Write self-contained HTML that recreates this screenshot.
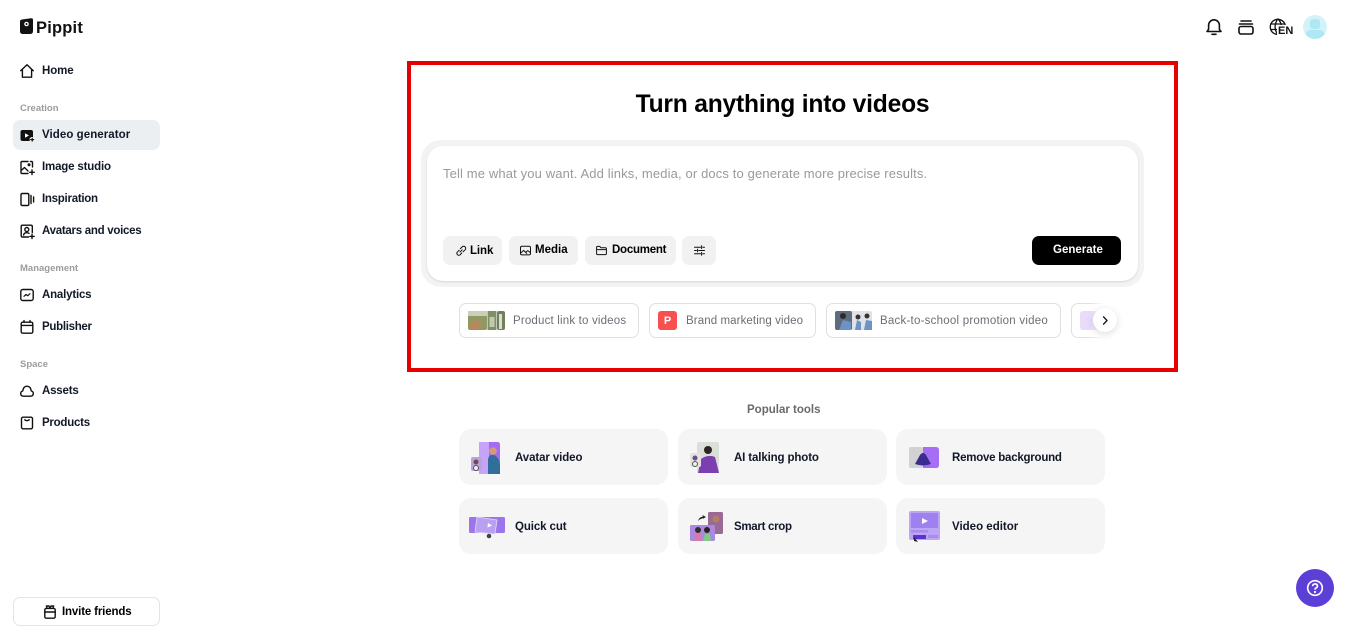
<!DOCTYPE html>
<html><head><meta charset="utf-8"><style>
*{box-sizing:border-box}
html,body{margin:0;padding:0;width:1365px;height:637px;overflow:hidden;background:#fff;font-family:"Liberation Sans",sans-serif}
.a{position:absolute}
.t{position:absolute;white-space:nowrap;font-weight:700;font-size:11.5px;color:#111827;line-height:14px;margin-top:1px}
.sec{position:absolute;left:20px;font-size:9.5px;font-weight:700;color:#9c9c9c;line-height:12px;white-space:nowrap;margin-top:1px}
svg{position:absolute;overflow:visible}
.btn{position:absolute;top:236px;height:29px;background:#f1f1f1;border-radius:7px}
.btn span{position:absolute;top:6px;font-size:11.5px;line-height:14px;font-weight:700;color:#000;white-space:nowrap;margin-top:1px}
.chip{position:absolute;top:303px;height:35px;border:1px solid #e0e0e0;border-radius:7px;background:#fff}
.chip span{position:absolute;top:10px;font-size:11.5px;line-height:14px;color:#6b6e76;white-space:nowrap}
.card{position:absolute;width:209px;height:56px;background:#f5f5f5;border-radius:12px}
.card span{position:absolute;left:56px;top:21px;font-size:11.5px;line-height:14px;font-weight:700;color:#111827;white-space:nowrap;margin-top:1px}
.ic{fill:none;stroke:#111;stroke-width:1.4;stroke-linejoin:round;stroke-linecap:round}
</style></head><body>

<!-- logo -->
<svg style="left:20px;top:18px" width="13" height="16" viewBox="0 0 13 16"><path d="M2 1.5L11 0.3Q13 0 13 2V13Q13 16 10 16H3Q0 16 0 13V3.5Q0 1.8 2 1.5Z" fill="#111"/><circle cx="6.5" cy="6" r="2.3" fill="#fff"/><circle cx="6.5" cy="6" r="1" fill="#111"/></svg>
<div class="t" style="left:36px;top:18px;font-size:16.5px;line-height:18px;color:#111;letter-spacing:.2px">Pippit</div>

<!-- sidebar -->
<div class="a" style="left:13px;top:120px;width:147px;height:30px;background:#ebeff2;border-radius:7px"></div>
<svg class="ic" style="left:20px;top:64px" width="14" height="14" viewBox="0 0 14 14"><path d="M0.7 6.7L7 0.8L13.3 6.7M2.4 5.4V13.2H11.6V5.4"/></svg>
<div class="t" style="left:42px;top:63px;letter-spacing:-.1px">Home</div>
<div class="sec" style="top:102px">Creation</div>
<svg style="left:20px;top:128px" width="15" height="15" viewBox="0 0 15 15"><rect x="0.5" y="2" width="12.5" height="11" rx="2" fill="#111"/><path d="M5 5.3L9 7.5L5 9.7Z" fill="#fff"/><path d="M12.2 9v5M9.7 11.5h5" stroke="#fff" stroke-width="3"/><path d="M12.2 9.6v4M10.2 11.6h4" stroke="#111" stroke-width="1.2"/></svg>
<div class="t" style="left:42px;top:127px;letter-spacing:.06px">Video generator</div>
<svg class="ic" style="left:20px;top:160px" width="15" height="15" viewBox="0 0 15 15"><path d="M8 1.5H2Q1 1.5 1 2.5V12.5Q1 13.5 2 13.5H8M12.5 7V2.5Q12.5 1.5 11.5 1.5H10.5M1.2 10.5L4.5 7.5L8 11"/><circle cx="9" cy="4.8" r=".8"/><path d="M12 10v4.6M9.7 12.3h4.6"/></svg>
<div class="t" style="left:42px;top:159px;letter-spacing:-.17px">Image studio</div>
<svg class="ic" style="left:20px;top:192px" width="15" height="15" viewBox="0 0 15 15"><rect x="1" y="1.5" width="7.8" height="12" rx="1.2"/><path d="M11 3.5v8M13.6 5v5"/></svg>
<div class="t" style="left:42px;top:191px;letter-spacing:-.27px">Inspiration</div>
<svg class="ic" style="left:20px;top:224px" width="15" height="15" viewBox="0 0 15 15"><path d="M8.5 13H2.5Q1.2 13 1.2 11.8V2.5Q1.2 1.2 2.5 1.2H11Q12.3 1.2 12.3 2.5V8.5"/><circle cx="6.8" cy="5.5" r="2"/><path d="M3.6 11Q4 8.7 6.8 8.7Q8.2 8.7 9 9.4"/><path d="M12 10.2v4.4M9.8 12.4h4.4"/></svg>
<div class="t" style="left:42px;top:223px;letter-spacing:-.28px">Avatars and voices</div>
<div class="sec" style="top:262px">Management</div>
<svg class="ic" style="left:20px;top:288px" width="14" height="14" viewBox="0 0 14 14"><rect x="0.8" y="1.5" width="12.4" height="11" rx="2"/><path d="M4 8.3L6 6.5L7.8 7.7L10 5.7" stroke-width="1.2"/></svg>
<div class="t" style="left:42px;top:287px;letter-spacing:-.2px">Analytics</div>
<svg class="ic" style="left:20px;top:320px" width="14" height="14" viewBox="0 0 14 14"><rect x="1.2" y="2.2" width="11.6" height="11" rx="1.5"/><path d="M1.2 5.4H12.8M4 .6V2.2M10 .6V2.2"/></svg>
<div class="t" style="left:42px;top:319px;letter-spacing:-.3px">Publisher</div>
<div class="sec" style="top:358px">Space</div>
<svg class="ic" style="left:20px;top:384px" width="14" height="14" viewBox="0 0 14 14"><path d="M3.5 12.2Q.7 12 .7 9.5Q.7 7.5 2.7 7Q3.5 2.2 7 2.2Q10.5 2.2 11.3 7Q13.3 7.5 13.3 9.5Q13.3 12 10.5 12.2Z"/></svg>
<div class="t" style="left:42px;top:383px;letter-spacing:-.2px">Assets</div>
<svg class="ic" style="left:20px;top:416px" width="14" height="14" viewBox="0 0 14 14"><rect x="1.5" y="1.2" width="11" height="11.6" rx="1.6"/><path d="M4.8 3.8Q7 5.6 9.2 3.8"/></svg>
<div class="t" style="left:42px;top:415px;letter-spacing:-.25px">Products</div>

<div class="a" style="left:13px;top:597px;width:147px;height:29px;border:1px solid #e4e4e4;border-radius:7px"></div>
<svg class="ic" style="left:44px;top:605px" width="12" height="14" viewBox="0 0 12 14"><rect x="0.8" y="3.4" width="10.4" height="9.8" rx="1.4"/><path d="M.8 7H11.2M3 3.4L2.4 1H5L6 3.4L7 1H9.6L9 3.4"/></svg>
<div class="t" style="left:62px;top:604px;color:#000;letter-spacing:-.15px">Invite friends</div>

<!-- top right -->
<svg class="ic" style="left:1205px;top:18px" width="18" height="18" viewBox="0 0 18 18"><path d="M2 13.5H16L14.4 11.4V7.2A5.4 5.4 0 0 0 3.6 7.2V11.4ZM7 16.3H11" stroke-width="1.6"/></svg>
<svg class="ic" style="left:1238px;top:20px" width="16" height="15" viewBox="0 0 16 15"><path d="M3 1H13M1.5 4H14.5" stroke-width="1.6"/><rect x="1" y="6.5" width="14" height="7.5" rx="2" stroke-width="1.6"/></svg>
<svg class="ic" style="left:1269px;top:18px" width="18" height="18" viewBox="0 0 18 18"><path d="M11 16.2A7.6 7.6 0 1 1 16.4 8M1.6 6H16M1.6 11.5H9M8.7 1Q3.5 8.8 8.7 16.6M9 1Q12.5 4.5 12.3 9" stroke-width="1.3"/></svg>
<div class="t" style="left:1277px;top:24px;font-size:11px;line-height:12px;color:#111;background:#fff;padding-left:1px">EN</div>
<div class="a" style="left:1303px;top:15px;width:24px;height:24px;border-radius:50%;background:#d3f3f8;overflow:hidden">
  <div class="a" style="left:7px;top:4px;width:10px;height:10px;border-radius:3px;background:#aee8f2"></div>
  <div class="a" style="left:2px;top:15px;width:20px;height:12px;border-radius:6px 6px 0 0;background:#aee8f2"></div>
</div>

<!-- red box -->
<div class="a" style="left:407px;top:61px;width:771px;height:311px;border:4px solid #e60000"></div>
<div class="t" style="left:407px;width:751px;top:89px;font-size:24.6px;line-height:30px;text-align:center;color:#000;letter-spacing:-.2px">Turn anything into videos</div>

<div class="a" style="left:421px;top:140px;width:723px;height:147px;background:#f3f3f3;border-radius:20px"></div>
<div class="a" style="left:427px;top:146px;width:711px;height:135px;background:#fff;border-radius:16px;box-shadow:0 1px 2px rgba(0,0,0,.12)"></div>
<div class="t" style="left:443px;top:165px;font-size:13px;line-height:15px;font-weight:400;color:#9a9a9a;letter-spacing:.134px">Tell me what you want. Add links, media, or docs to generate more precise results.</div>

<div class="btn" style="left:443px;width:59px"><span style="left:27px;top:7px;letter-spacing:-.1px">Link</span>
<svg class="ic" style="left:12px;top:9px" width="12" height="12" viewBox="0 0 12 12"><path d="M5 7L7.2 4.8M4.2 5.2L2.2 7.2A2 2 0 0 0 4.9 10L6.8 8M5.4 3.6L7.2 1.9A2 2 0 0 1 10.1 4.8L8 6.8" stroke-width="1"/></svg></div>
<div class="btn" style="left:509px;width:69px"><span style="left:26px">Media</span>
<svg class="ic" style="left:11px;top:9px" width="11" height="11" viewBox="0 0 11 11"><rect x=".5" y="1.3" width="10" height="8.6" rx="1.4" stroke-width="1"/><path d="M.8 8L3.6 5.4L6.8 8.4M6 7L7.8 5.6L10.3 7.6" stroke-width="1"/></svg></div>
<div class="btn" style="left:585px;width:91px"><span style="left:27px;letter-spacing:-.25px">Document</span>
<svg class="ic" style="left:11px;top:9px" width="11" height="11" viewBox="0 0 11 11"><path d="M.6 8.6V2.4Q.6 1.4 1.6 1.4H3.8L5 2.8H9.4Q10.4 2.8 10.4 3.8V8.6Q10.4 9.6 9.4 9.6H1.6Q.6 9.6 .6 8.6ZM.8 4.6H10.2" stroke-width="1"/></svg></div>
<div class="btn" style="left:682px;width:34px">
<svg class="ic" style="left:12px;top:9px" width="11" height="11" viewBox="0 0 11 11"><path d="M.5 2.2H6.5M8.8 2.2H10.5M7.6 .8V3.6M.5 5.5H2.4M4.8 5.5H10.5M3.6 4.1V6.9M.5 8.8H6.5M8.8 8.8H10.5M7.6 7.4V10.2" stroke-width="1"/></svg></div>
<div class="a" style="left:1032px;top:236px;width:89px;height:29px;background:#000;border-radius:7px"></div>
<div class="t" style="left:1053px;top:242px;color:#fff">Generate</div>

<!-- chips -->
<div class="chip" style="left:459px;width:180px">
  <svg style="left:8px;top:7px" width="37" height="19" viewBox="0 0 37 19"><rect width="19" height="19" rx="2" fill="#8f9a63"/><rect y="0" width="19" height="5" fill="#c9cfb8"/><path d="M1 14L8 8L16 15L10 18H2Z" fill="#b48a5c"/><rect x="19.5" width="9" height="19" fill="#7f9068"/><rect x="21.5" y="6" width="5" height="10" fill="#c5c8b0"/><rect x="29" width="8" height="19" rx="2" fill="#70805a"/><rect x="31" y="3" width="3" height="15" fill="#dcdcd4"/></svg>
  <span style="left:53px;letter-spacing:.18px">Product link to videos</span>
</div>
<div class="chip" style="left:649px;width:167px">
  <div class="a" style="left:8px;top:7px;width:19px;height:19px;background:#f94f4f;border-radius:3px;color:#fff;font-size:11px;font-weight:700;text-align:center;line-height:20px">P</div>
  <span style="left:36px;letter-spacing:.1px">Brand marketing video</span>
</div>
<div class="chip" style="left:826px;width:235px">
  <svg style="left:8px;top:7px" width="37" height="19" viewBox="0 0 37 19"><rect width="37" height="19" rx="2" fill="#dfe3e8"/><rect width="17" height="19" rx="2" fill="#5e6c80"/><path d="M4 19L8 9L16 11V19Z" fill="#6d93c3"/><circle cx="8" cy="5" r="3" fill="#2e2a2a"/><path d="M20 19L22 9L26 11V19Z" fill="#6d93c3"/><circle cx="23" cy="6" r="2.5" fill="#3a3030"/><path d="M29 19L31 9L37 10V19Z" fill="#6d93c3"/><circle cx="32" cy="5" r="2.5" fill="#3a3030"/></svg>
  <span style="left:53px;letter-spacing:.23px">Back-to-school promotion video</span>
</div>
<div class="a" style="left:1071px;top:303px;width:40px;height:35px;border:1px solid #e0e0e0;border-right:0;border-radius:7px 0 0 7px;overflow:hidden">
  <div class="a" style="left:8px;top:7px;width:19px;height:19px;background:#e8dcfb;border-radius:3px"></div>
</div>
<div class="a" style="left:1090px;top:300px;width:34px;height:40px;background:linear-gradient(90deg,rgba(255,255,255,0),#fff 40%)"></div>
<div class="a" style="left:1093px;top:308px;width:24px;height:24px;background:#fff;border-radius:50%;box-shadow:0 2px 8px rgba(0,0,0,.14)"></div>
<svg class="ic" style="left:1102px;top:316px" width="7" height="9" viewBox="0 0 7 9"><path d="M1.5 .8L5 4.5L1.5 8.2" stroke-width="1.3"/></svg>

<div class="t" style="left:747px;top:402px;color:#6a6a6a">Popular tools</div>

<!-- cards -->
<div class="card" style="left:459px;top:429px"><span style="letter-spacing:-.1px">Avatar video</span>
  <svg style="left:10px;top:12px" width="35" height="33" viewBox="0 0 35 33"><rect x="10" y="1" width="21" height="32" rx="2.5" fill="#a66bf5"/><rect x="10" y="1" width="10" height="32" fill="#c5a3f8"/><path d="M19 33V18Q20 13 25 14Q30 16 31 24V33Z" fill="#2f6f99"/><circle cx="24" cy="10" r="3.8" fill="#d49a7a"/><rect x="2" y="16" width="11" height="14" rx="2" fill="#b9a3dd"/><circle cx="7" cy="21" r="2.5" fill="#6e4c55"/><circle cx="7" cy="27" r="2.5" fill="#eee" stroke="#555"/></svg></div>
<div class="card" style="left:678px;top:429px"><span style="letter-spacing:-.13px">AI talking photo</span>
  <svg style="left:10px;top:12px" width="35" height="33" viewBox="0 0 35 33"><rect x="9" y="1" width="22" height="31" rx="2" fill="#dadfd9"/><path d="M10 32L13 18Q20 13 27 16L31 32Z" fill="#7b3fb0"/><circle cx="20" cy="9" r="4" fill="#2f2422"/><rect x="2" y="12" width="11" height="14" rx="2" fill="#e3e3e3"/><circle cx="7" cy="17" r="2.5" fill="#6e4c85"/><circle cx="7" cy="23" r="2.5" fill="#eee" stroke="#555"/></svg></div>
<div class="card" style="left:896px;top:429px"><span style="letter-spacing:-.24px">Remove background</span>
  <svg style="left:13px;top:18px" width="30" height="21" viewBox="0 0 30 21"><rect width="14" height="21" rx="2" fill="#d2d2d2"/><path d="M14 0H27Q30 0 30 3V18Q30 21 27 21H14Z" fill="#a56ef5"/><path d="M6 17L11 8Q14 4 17 8L22 17Q14 20 6 17Z" fill="#3b2c91"/></svg></div>
<div class="card" style="left:459px;top:498px"><span style="letter-spacing:-.1px">Quick cut</span>
  <svg style="left:10px;top:19px" width="37" height="22" viewBox="0 0 37 22"><rect y="0" width="36" height="16" rx="1.5" fill="#9a76ea"/><path d="M8 0L28 3L26 17L6 15Z" fill="#b9a0f1" stroke="#e3d9fa" stroke-width=".8"/><path d="M19 6L23 8.5L18.5 10.5Z" fill="#fff"/><circle cx="20" cy="19" r="2.3" fill="#444"/></svg></div>
<div class="card" style="left:678px;top:498px"><span style="letter-spacing:-.3px">Smart crop</span>
  <svg style="left:12px;top:14px" width="33" height="30" viewBox="0 0 33 30"><rect x="18" y="0" width="15" height="22" rx="1.5" fill="#9a6a94"/><circle cx="26" cy="7" r="3.5" fill="#b37e65"/><rect y="13" width="25" height="16" rx="1.5" fill="#a98adf"/><circle cx="8" cy="18" r="3" fill="#3c2a2a"/><circle cx="17" cy="18" r="3" fill="#2d2222"/><path d="M4 29L6 22H11L12 29Z" fill="#d87aa8"/><path d="M13 29L15 22H20L21 29Z" fill="#7fc98b"/><path d="M8 9Q9 5 13 4.5L12.5 3L16 5L12.5 7L13 6Q10 7 8 9Z" fill="#222"/></svg></div>
<div class="card" style="left:896px;top:498px"><span>Video editor</span>
  <svg style="left:13px;top:13px" width="31" height="31" viewBox="0 0 31 31"><rect width="31" height="29" rx="2" fill="#bda5f5"/><rect x="2" y="2" width="27" height="15" fill="#9e80ee"/><path d="M13 7L19 10L13 13Z" fill="#fff"/><rect x="2" y="19" width="17" height="2.5" fill="#a78ced"/><rect x="4" y="24" width="13" height="4" fill="#5a32d6"/><rect x="19" y="24" width="10" height="3" fill="#a78ced"/><path d="M5 26L9 31L5 30Z" fill="#222"/></svg></div>

<!-- help -->
<div class="a" style="left:1296px;top:569px;width:38px;height:38px;border-radius:50%;background:#5b3fd6"></div>
<svg style="left:1306px;top:579px" width="18" height="18" viewBox="0 0 18 18" fill="none" stroke="#fff"><circle cx="9" cy="9" r="7.3" stroke-width="1.6"/><path d="M6.6 7.2Q6.8 4.9 9 4.9Q11.4 4.9 11.4 7Q11.4 8.3 10 9Q9 9.5 9 10.7" stroke-width="1.6"/><circle cx="9" cy="13" r=".6" fill="#fff"/></svg>
</body></html>
